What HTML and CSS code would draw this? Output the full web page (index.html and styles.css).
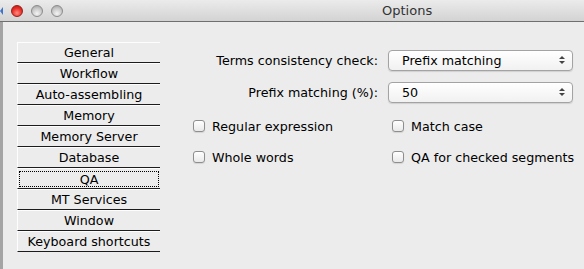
FILE: index.html
```
<!DOCTYPE html>
<html lang="en">
<head>
  <meta charset="UTF-8">
  <title>Options</title>
  <link rel="stylesheet" href="styles.css">
</head>
<body>
  <div class="window">
    <div class="titlebar">
      <span class="edge-arrow"></span>
      <div class="lights">
        <span class="light red"></span>
        <span class="light grey"></span>
        <span class="light grey"></span>
      </div>
      <div class="title">Options</div>
    </div>

    <div class="content">
      <ul class="nav">
        <li>General</li>
        <li>Workflow</li>
        <li>Auto-assembling</li>
        <li>Memory</li>
        <li>Memory Server</li>
        <li>Database</li>
        <li class="active"><span>QA</span></li>
        <li>MT Services</li>
        <li>Window</li>
        <li>Keyboard shortcuts</li>
      </ul>

      <div class="panel">
        <div class="form">
          <label>Terms consistency check:</label>
          <div class="combo">Prefix matching<span class="arrows"><i class="up"></i><i class="down"></i></span></div>
          <label>Prefix matching (%):</label>
          <div class="combo">50<span class="arrows"><i class="up"></i><i class="down"></i></span></div>
        </div>

        <div class="checks">
          <div class="check"><span class="box"></span>Regular expression</div>
          <div class="check"><span class="box"></span>Match case</div>
          <div class="check"><span class="box"></span>Whole words</div>
          <div class="check"><span class="box"></span>QA for checked segments</div>
        </div>
      </div>
    </div>
  </div>
</body>
</html>
```
FILE: styles.css
```
body {
  margin: 0;
  font-family: "DejaVu Sans", "Lucida Grande", sans-serif;
  font-size: 12.7px;
  color: #000;
  background: #ececec;
  overflow: hidden;
}

.window {
  width: 584px;
  height: 269px;
  background: #ececec;
}

/* Title bar */
.titlebar {
  position: relative;
  height: 21px;
  display: flex;
  align-items: center;
  background: linear-gradient(#ebebeb, #d3d3d3);
  border-bottom: 1px solid #6f6f6f;
}

.edge-arrow {
  position: absolute;
  left: 0;
  top: 7px;
  width: 0;
  height: 0;
  border-top: 4px solid transparent;
  border-bottom: 4px solid transparent;
  border-right: 3px solid #3f73c8;
}

.lights {
  display: flex;
  gap: 8px;
  padding-left: 11px;
  margin-top: 1px;
}

.light {
  width: 12px;
  height: 12px;
  border-radius: 50%;
  box-sizing: border-box;
}

.light.red {
  background: radial-gradient(circle at 50% 70%, #ff8a80 0%, #e8302a 55%, #b0120e 100%);
  border: 1px solid #9a1d18;
}

.light.grey {
  background: radial-gradient(circle at 50% 75%, #f4f4f4 0%, #c9c9c9 55%, #9c9c9c 100%);
  border: 1px solid #8c8c8c;
}

.title {
  margin-left: 319px;
  font-size: 13px;
  color: #333;
}

/* Content */
.content {
  display: flex;
  height: 247px;
  border-left: 3px solid #a4a4a4;
  padding: 20px 0 0 14px;
  box-sizing: border-box;
}

.nav {
  list-style: none;
  margin: 0;
  padding: 0;
  width: 143px;
}

.nav li {
  height: 19px;
  line-height: 20px;
  text-align: center;
  border-top: 1px solid #fdfdfd;
  border-left: 1px solid #fdfdfd;
  border-bottom: 1px solid #1c1c1c;
  white-space: nowrap;
}

.nav li.active span {
  display: block;
  margin: 2px 1px 1px 1px;
  height: 14px;
  line-height: 15px;
  border: 1px dotted #000;
}

.panel {
  margin-top: 8px;
}

.form {
  display: grid;
  grid-template-columns: 218px 185px;
  column-gap: 10px;
  row-gap: 11px;
  align-items: center;
}

.form label {
  text-align: right;
  white-space: nowrap;
}

.combo {
  position: relative;
  height: 19px;
  line-height: 20px;
  padding-left: 13px;
  border: 1px solid #a3a3a3;
  border-radius: 4px;
  background: linear-gradient(#ffffff, #f1f1f1);
  box-shadow: 0 1px 1px rgba(0, 0, 0, 0.12);
}

.arrows {
  position: absolute;
  right: 7px;
  top: 5px;
  display: flex;
  flex-direction: column;
  gap: 2px;
}

.arrows i {
  width: 0;
  height: 0;
  border-left: 3px solid transparent;
  border-right: 3px solid transparent;
}

.arrows .up {
  border-bottom: 3px solid #444;
}

.arrows .down {
  border-top: 3px solid #444;
}

.checks {
  display: grid;
  grid-template-columns: 199px 190px;
  row-gap: 11px;
  margin: 13px 0 0 33px;
}

.check {
  display: flex;
  align-items: center;
  height: 20px;
  white-space: nowrap;
}

.box {
  width: 12px;
  height: 12px;
  margin-right: 7px;
  box-sizing: border-box;
  border: 1px solid #8e8e8e;
  border-radius: 3px;
  background: linear-gradient(#ffffff, #e9e9e9);
  box-shadow: 0 1px 1px rgba(0, 0, 0, 0.1);
}
```
